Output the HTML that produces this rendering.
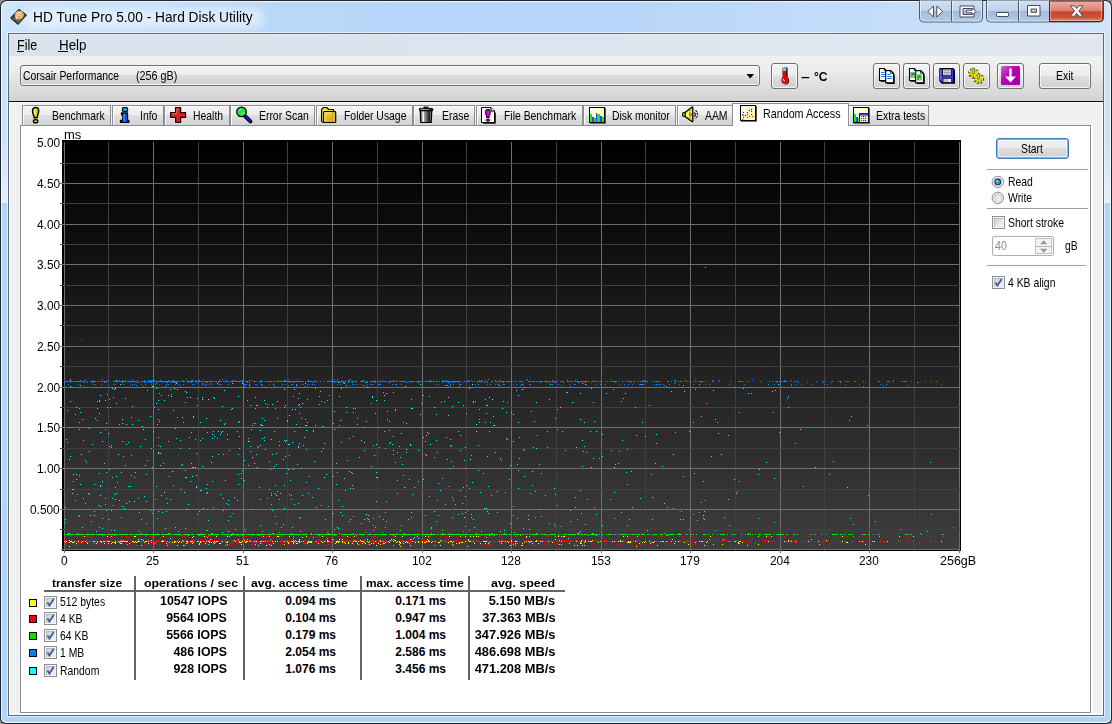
<!DOCTYPE html>
<html lang="en"><head><meta charset="utf-8"><title>HD Tune Pro 5.00 - Hard Disk Utility</title>
<style>
*{box-sizing:border-box}
html,body{margin:0;padding:0}
body{width:1112px;height:724px;overflow:hidden;background:#8a8a8a;position:relative;font-family:"Liberation Sans",sans-serif;color:#000}
.a{position:absolute}
.t{position:absolute;white-space:pre;line-height:1;transform-origin:0 0;font-size:13px}
.b{font-weight:bold}
#win{left:0;top:0;width:1112px;height:724px;border-radius:7px 7px 6px 6px;background:#1b2633;overflow:hidden}
#glass{left:1px;top:1px;width:1110px;height:722px;border-radius:6px 6px 5px 5px;background:#f4f9ff;overflow:hidden}
#gl2{left:1px;top:1px;width:1108px;height:720px;border-radius:5px;overflow:hidden;
 background:linear-gradient(90deg,#d0e5fb 0,#c7dffa 50px,#b9d7f9 275px,#b8d6f9 620px,#c8dffa 950px,#d2e6fb 100%) 0 0/100% 31px no-repeat,
 linear-gradient(180deg,#cee3f9 0,#cde2f9 140px,#e6f0fb 201px,#b3d4f7 201px,#b2d4f8 100%)}
#tglow{left:22px;top:6px;width:240px;height:21px;border-radius:10px;background:rgba(255,255,255,.5);filter:blur(5px)}
#tglowr{display:none}
#frin{left:6px;top:31px;width:1098px;height:685px;border:1px solid rgba(240,248,255,.75)}
#client{left:8px;top:33px;width:1096px;height:683px;background:#f0f0f0;border:1px solid #5b6a7b;box-shadow:inset 1px 0 0 #fff,inset -1px 0 0 #fff}
#menubar{left:9px;top:34px;width:1094px;height:22px;background:linear-gradient(90deg,#dbe2ed 0,#dde4ed 50%,#e3e8f0 100%);border-top:1px solid #e8edf5}
#tool{left:9px;top:56px;width:1094px;height:45px;background:linear-gradient(180deg,#f1f1f1 0,#ececec 30%,#d2d2d2 100%)}
#tline{left:9px;top:101px;width:1094px;height:1px;background:#0c0c0c}
#tline2{left:9px;top:102px;width:1094px;height:1px;background:#fafafa}
.btn{position:absolute;border:1px solid #707070;border-radius:3px;background:linear-gradient(180deg,#f3f3f3 0,#ececec 48%,#dedede 50%,#d0d0d0 100%);box-shadow:inset 0 0 0 1px rgba(255,255,255,.75)}
.tab{position:absolute;top:105px;height:20px;border:1px solid #8c8e94;border-bottom:none;background:linear-gradient(180deg,#f3f3f3 0,#ededed 48%,#dfdfdf 50%,#d3d3d3 100%);box-shadow:inset 1px 1px 0 rgba(255,255,255,.9)}
#pane{left:20px;top:125px;width:1071px;height:588px;background:#fff;border:1px solid #8a8d97;box-shadow:2px 0 0 #fff}
#bot{left:9px;top:713px;width:1094px;height:2px;background:#fff}
#seltab{left:732px;top:103px;width:117px;height:23px;background:#fff;border:1px solid #8c8e94;border-bottom:none}
.sep{position:absolute;height:1px;background:#a0a0a0}
.vs{position:absolute;width:2px;top:576px;height:104px;background:#646464}
.cb{position:absolute;width:13px;height:13px;border:1px solid #8e8f8f;background:#f4f4f4}
.cbi{position:absolute;left:1px;top:1px;width:9px;height:9px;background:linear-gradient(135deg,#c3c7cf 0,#e4e6e9 55%,#f8f8f8 100%);box-shadow:inset 1px 1px 0 #b4b9c2,inset -1px -1px 0 #e6e8ea}
.sw{position:absolute;left:29px;width:8px;height:8px;border:1px solid #000}
</style></head>
<body>
<div id="win" class="a"><div id="glass" class="a"><div id="gl2" class="a"><div id="tglow" class="a"></div><div id="tglowr" class="a"></div></div><div id="frin" class="a"></div></div></div>
<div id="client" class="a"></div><div id="menubar" class="a"></div><div id="tool" class="a"></div><div id="tline" class="a"></div><div id="tline2" class="a"></div><div id="bot" class="a"></div>
<svg class="a" style="left:9px;top:8px" width="19" height="18" viewBox="0 0 19 18">
<polygon points="1.5,10 10,1.2 17.5,7 9,16.5" fill="#3a3a3e" stroke="#26262a" stroke-width="1" stroke-linejoin="round"/>
<polygon points="3.5,10.5 9.5,14.8 13.5,10.6 8,7.5" fill="#6a6668"/>
<ellipse cx="10.3" cy="7" rx="4.6" ry="4.2" fill="#f0b24e" transform="rotate(-20 10.3 7)"/>
<ellipse cx="9.6" cy="6" rx="2.6" ry="2.2" fill="#f8cc7e" transform="rotate(-20 9.6 6)"/>
<circle cx="10.4" cy="6.9" r="1.3" fill="#c9c4c8"/>
<path d="M7 8.2 L7.6 11.2" stroke="#f4f0e8" stroke-width="1.1"/>
</svg>
<span class="t" style="left:32.5px;top:9px;font-size:15px;transform:scaleX(0.915);">HD Tune Pro 5.00 - Hard Disk Utility</span>
<svg class="a" style="left:917px;top:0" width="190" height="25" viewBox="0 0 190 25">
<defs>
<linearGradient id="cg" x1="0" y1="0" x2="0" y2="1"><stop offset="0" stop-color="#d3e2f3"/><stop offset=".5" stop-color="#bfd2ea"/><stop offset=".52" stop-color="#a3bad7"/><stop offset="1" stop-color="#b4cdea"/></linearGradient>
<linearGradient id="cr" x1="0" y1="0" x2="0" y2="1"><stop offset="0" stop-color="#efb0a4"/><stop offset=".5" stop-color="#dc7a6a"/><stop offset=".52" stop-color="#c9432f"/><stop offset=".8" stop-color="#cf5238"/><stop offset="1" stop-color="#e39a80"/></linearGradient>
</defs>
<path d="M2.5 0 V18 a4 4 0 0 0 4 4 H61.5 a4 4 0 0 0 4 -4 V0 Z" fill="url(#cg)" stroke="#4c5b6c"/>
<path d="M3.5 1 V18 a3 3 0 0 0 3 3 H61.5 a3 3 0 0 0 3 -3 V1" fill="none" stroke="rgba(255,255,255,.55)"/>
<path d="M34.5 1 V21.5" stroke="#4c5b6c"/><path d="M35.5 1 V20.5" stroke="rgba(255,255,255,.5)"/>
<path d="M69.500 0 V18 a4 4 0 0 0 4 4 H182.500 a4 4 0 0 0 4 -4 V0 Z" fill="url(#cg)" stroke="#4c5b6c"/>
<path d="M132.500 1 V21.500 H182.500 a3.500 3.500 0 0 0 3.500 -3.500 V1 Z" fill="url(#cr)" stroke="#5c1a14"/>
<path d="M70.500 1 V18 a3 3 0 0 0 3 3 H131.500" fill="none" stroke="rgba(255,255,255,.55)"/>
<path d="M133.500 1.500 V20.500 H182 a2.500 2.500 0 0 0 2.500 -2.500 V1.500" fill="none" stroke="rgba(255,255,255,.35)"/>
<path d="M101.500 1 V21.500" stroke="#4c5b6c"/><path d="M102.500 1 V20.500" stroke="rgba(255,255,255,.5)"/>
<!-- icons -->
<path d="M16.500 6 V17 L10.800 11.500 Z" fill="#fff" stroke="#454a5a" stroke-width="1" stroke-linejoin="round"/>
<path d="M19.800 6 V17 L25.500 11.500 Z" fill="#fff" stroke="#454a5a" stroke-width="1" stroke-linejoin="round"/>
<path d="M43 6 H57 V9.500 H54.500 V8.500 H46 V14.500 H54.500 V13.500 H57 V17 H43 Z" fill="#fff" stroke="#454a5a" stroke-width="1" stroke-linejoin="round"/>
<path d="M49.500 10.300 H55 V8.200 L59.300 11.500 L55 14.800 V12.700 H49.500 Z" fill="#fff" stroke="#454a5a" stroke-width=".9" stroke-linejoin="round"/>
<rect x="79.500" y="12.500" width="12" height="4" rx=".8" fill="#fff" stroke="#454a5a"/>
<path d="M110.500 5.500 H123 V16 H110.500 Z M114 9 V12.300 H119.500 V9 Z" fill="#fff" fill-rule="evenodd" stroke="#454a5a" stroke-linejoin="round"/>
<path d="M153.500 5.800 H157.600 L159.700 8.700 L161.800 5.800 H165.900 L161.800 11 L165.900 16.200 H161.800 L159.700 13.300 L157.600 16.200 H153.500 L157.600 11 Z" fill="#fff" stroke="#4a4f63" stroke-width="1" stroke-linejoin="round"/>
</svg>
<span class="t" style="left:17px;top:37px;font-size:15px;transform:scaleX(0.84);">File</span>
<span class="t" style="left:58.5px;top:37px;font-size:15px;transform:scaleX(0.89);">Help</span>
<div class="a" style="left:17px;top:51px;width:7px;height:1px;background:#000"></div><div class="a" style="left:58px;top:51px;width:10px;height:1px;background:#000"></div>
<div class="btn" style="left:20px;top:65px;width:740px;height:21px"></div>
<span class="t" style="left:23px;top:69px;transform:scaleX(0.8);">Corsair Performance</span>
<span class="t" style="left:136.3px;top:69px;transform:scaleX(0.83);">(256 gB)</span>
<svg class="a" style="left:746px;top:74px" width="9" height="5" viewBox="0 0 9 5"><path d="M0.500 0 H8 L4.250 4.500 Z" fill="#000"/></svg>
<div class="btn" style="left:771px;top:63px;width:27px;height:26px"></div>
<svg class="a" style="left:777px;top:66px" width="16" height="20" viewBox="0 0 16 20">
<rect x="6.500" y="1.600" width="4.100" height="12" fill="#0a0a0a"/><circle cx="8.500" cy="14.700" r="3.700" fill="#0a0a0a"/>
<circle cx="7.300" cy="14.200" r="3.700" fill="#5fe6ea"/>
<circle cx="7.900" cy="14.200" r="3.500" fill="#f00000"/>
<rect x="5.700" y="1.800" width="3.600" height="11" fill="#f00000"/>
<rect x="5.700" y="1.800" width="3.600" height="3.200" fill="#3fe2e8"/>
<rect x="5.300" y="2" width=".8" height="10" fill="#7a2020" opacity=".5"/>
<path d="M6.200 12.800 Q6.300 14.600 7.800 15" stroke="#fff" stroke-width="1.100" fill="none"/>
</svg>
<span class="t b" style="left:801px;top:70px;transform:scaleX(1.2);">–</span>
<span class="t b" style="left:813.5px;top:70px;transform:scaleX(0.93);">°C</span>
<div class="btn" style="left:873px;top:63px;width:27px;height:26px"></div>
<div class="btn" style="left:903px;top:63px;width:27px;height:26px"></div>
<div class="btn" style="left:933px;top:63px;width:27px;height:26px"></div>
<div class="btn" style="left:963px;top:63px;width:27px;height:26px"></div>
<div class="btn" style="left:997px;top:63px;width:27px;height:26px"></div>
<div class="btn" style="left:1039px;top:63px;width:52px;height:26px"></div>
<span class="t" style="left:1056px;top:69px;transform:scaleX(0.8);">Exit</span>
<svg class="a" style="left:878px;top:67px" width="18" height="18" viewBox="0 0 18 18">
<path d="M2.500 2.500 H7 L9 4.500 V14.800 H2.500 Z" fill="#000"/>
<path d="M1.500 1.500 H6.300 L8.300 3.500 V13.500 H1.500 Z" fill="#fff" stroke="#000" stroke-width="1.100"/>
<path d="M6.300 1.500 V3.500 H8.300" fill="none" stroke="#000" stroke-width=".8"/>
<path d="M3 5.500 H6.500 M3 7.500 H7 M3 9.500 H7" stroke="#0a84ff" stroke-width="1.100"/>
<path d="M8.700 4.700 H13.700 L16.700 7.500 V17 H8.700 Z" fill="#000"/>
<path d="M7.700 3.600 H12.700 L15.500 6.300 V15.800 H7.700 Z" fill="#fff" stroke="#000" stroke-width="1.100"/>
<path d="M12.700 3.600 V6.300 H15.500" fill="none" stroke="#000" stroke-width=".8"/>
<path d="M9.300 7.500 H12.500 M9.300 9.500 H14 M9.300 11.500 H14" stroke="#0a84ff" stroke-width="1.100"/>
</svg>
<svg class="a" style="left:908px;top:67px" width="18" height="18" viewBox="0 0 18 18">
<path d="M2.500 2.500 H7 L9 4.500 V14.800 H2.500 Z" fill="#000"/>
<path d="M1.500 1.500 H6.300 L8.300 3.500 V13.500 H1.500 Z" fill="#fff" stroke="#000" stroke-width="1.100"/>
<path d="M6.300 1.500 V3.500 H8.300" fill="none" stroke="#000" stroke-width=".8"/>
<rect x="2.600" y="5" width="4.600" height="5.800" fill="#18c828"/><rect x="2.600" y="5" width="4.600" height="1" fill="#30c8ff"/><rect x="4.200" y="6.500" width="1.600" height="1.600" fill="#f01010"/><rect x="4.600" y="8" width="1.300" height="2.200" fill="#e8e020"/>
<path d="M8.700 4.700 H13.700 L16.700 7.500 V17 H8.700 Z" fill="#000"/>
<path d="M7.700 3.600 H12.700 L15.500 6.300 V15.800 H7.700 Z" fill="#fff" stroke="#000" stroke-width="1.100"/>
<path d="M12.700 3.600 V6.300 H15.500" fill="none" stroke="#000" stroke-width=".8"/>
<rect x="9" y="7.600" width="4.600" height="5.800" fill="#18c828"/><rect x="9" y="7.600" width="4.600" height="1" fill="#30c8ff"/><rect x="10.600" y="9.200" width="1.600" height="1.600" fill="#f01010"/><rect x="11" y="10.800" width="1.300" height="2.200" fill="#e8e020"/>
</svg>
<svg class="a" style="left:938px;top:67px" width="18" height="18" viewBox="0 0 18 18">
<path d="M2.500 2.500 H17 V16.800 H4 L2.500 15.500 Z" fill="#000"/>
<path d="M1.800 1.500 H15.500 V15.500 H3.200 L1.800 14.200 Z" fill="#3434ff" stroke="#000" stroke-width="1"/>
<path d="M2.800 2.500 V13.500" stroke="#8a8aff" stroke-width=".9"/>
<rect x="4.500" y="2" width="9" height="6.800" fill="#dcdcdc" stroke="#000" stroke-width=".8"/>
<path d="M5.500 3.800 H12.500 M5.500 5.500 H12.500 M5.500 7.200 H12.500" stroke="#8a8a8a" stroke-width=".8"/>
<rect x="5" y="11.300" width="8.500" height="4" fill="#c4c4c4" stroke="#000" stroke-width=".6"/>
<rect x="10.600" y="12" width="2" height="2.800" fill="#fff"/>
</svg>
<svg class="a" style="left:968px;top:66px" width="20" height="20" viewBox="0 0 20 20">
<g fill="none" stroke="#3c3600" stroke-dasharray="1.700 1.250">
<circle cx="5.600" cy="7.200" r="3.900" stroke-width="3"/><circle cx="10.700" cy="12.600" r="3.900" stroke-width="3"/></g>
<circle cx="5.600" cy="7.200" r="3.300" fill="#3c3600"/><circle cx="10.700" cy="12.600" r="3.300" fill="#3c3600"/>
<g fill="none" stroke="#ecec00" stroke-dasharray="1.700 1.250">
<circle cx="5.300" cy="6.800" r="3.700" stroke-width="2.200"/><circle cx="10.400" cy="12.200" r="3.700" stroke-width="2.200"/></g>
<circle cx="5.300" cy="6.800" r="3" fill="#e6e600"/><circle cx="10.400" cy="12.200" r="3" fill="#e6e600"/>
<path d="M4.300 7.500 V3.200 L5.300 1.800 L6.300 3.200 V7.500 Z" fill="#b8b8b8" stroke="#444" stroke-width=".7"/>
<path d="M9.400 13 V8.700 L10.400 7.300 L11.400 8.700 V13 Z" fill="#b8b8b8" stroke="#444" stroke-width=".7"/>
<path d="M5 3.200 V7 M10.100 8.700 V12.500" stroke="#fff" stroke-width=".6"/>
</svg>
<svg class="a" style="left:1001px;top:66px" width="20" height="20" viewBox="0 0 20 20">
<defs><linearGradient id="mg" x1="0" y1="0" x2="1" y2="1"><stop offset="0" stop-color="#d860d8"/><stop offset=".45" stop-color="#b400b4"/><stop offset="1" stop-color="#a000a0"/></linearGradient></defs>
<rect x="0" y="0" width="19" height="19" rx="1.500" fill="url(#mg)"/>
<path d="M8.300 2.500 H10.700 V10.500 H15 L9.500 16.500 L4 10.500 H8.300 Z" fill="#fff"/>
</svg>
<div id="pane" class="a"></div>
<div class="tab" style="left:22px;width:89px"></div>
<span class="t" style="left:51.5px;top:109px;transform:scaleX(0.8);">Benchmark</span>
<div class="tab" style="left:112px;width:52px"></div>
<span class="t" style="left:140.3px;top:109px;transform:scaleX(0.8);">Info</span>
<div class="tab" style="left:164px;width:66px"></div>
<span class="t" style="left:193.2px;top:109px;transform:scaleX(0.8);">Health</span>
<div class="tab" style="left:230px;width:85px"></div>
<span class="t" style="left:258.7px;top:109px;transform:scaleX(0.8);">Error Scan</span>
<div class="tab" style="left:316px;width:97px"></div>
<span class="t" style="left:344.2px;top:109px;transform:scaleX(0.8);">Folder Usage</span>
<div class="tab" style="left:413px;width:62px"></div>
<span class="t" style="left:442px;top:109px;transform:scaleX(0.8);">Erase</span>
<div class="tab" style="left:476px;width:107px"></div>
<span class="t" style="left:504px;top:109px;transform:scaleX(0.8);">File Benchmark</span>
<div class="tab" style="left:583px;width:93px"></div>
<span class="t" style="left:612px;top:109px;transform:scaleX(0.8);">Disk monitor</span>
<div class="tab" style="left:677px;width:56px"></div>
<span class="t" style="left:705px;top:109px;transform:scaleX(0.8);">AAM</span>
<div class="tab" style="left:848px;width:81px"></div>
<span class="t" style="left:876.3px;top:109px;transform:scaleX(0.8);">Extra tests</span>
<div id="seltab" class="a"></div>
<span class="t" style="left:762.8px;top:107px;transform:scaleX(0.825);">Random Access</span>
<svg class="a" style="left:30px;top:106px" width="12" height="18" viewBox="0 0 12 18"><path d="M5.600 1.600 C8.200 1.600 8.900 3.200 8.600 5.600 C8.300 8 7.300 9.600 7 11.800 H4.300 C4 9.600 2.800 8 2.600 5.600 C2.400 3.200 3.200 1.600 5.600 1.600 Z" fill="#dede00" stroke="#000" stroke-width="1.500"/>
<path d="M4.500 3.500 C4.200 5 4.500 7 5.100 9" stroke="#ffff8a" stroke-width="1.100" fill="none"/>
<ellipse cx="5.600" cy="15.200" rx="2.200" ry="1.600" fill="#d4d400" stroke="#000" stroke-width="1.400"/></svg>
<svg class="a" style="left:119px;top:106px" width="12" height="18" viewBox="0 0 12 18"><rect x="3.500" y="1.600" width="5" height="3.800" rx="1" fill="#00c4ff" stroke="#000" stroke-width="1.300"/>
<path d="M2.500 7 H8.500 V14.500 H9.800 V16.300 H1.500 V14.500 H3.800 V8.800 H2.500 Z" fill="#0058ff" stroke="#000" stroke-width="1.300" stroke-linejoin="round"/>
<path d="M5 8 V15.500" stroke="#3aa0ff" stroke-width="1.400"/></svg>
<svg class="a" style="left:169px;top:106px" width="19" height="18" viewBox="0 0 19 18"><path d="M7.300 2.300 H12.300 V7.300 H17.300 V12 H12.300 V17 H7.300 V12 H2.300 V7.300 H7.300 Z" fill="#444" opacity=".55"/>
<path d="M6.600 1.600 H11.500 V6.600 H16.500 V11.300 H11.500 V16.300 H6.600 V11.300 H1.600 V6.600 H6.600 Z" fill="#e22020" stroke="#140000" stroke-width="1.200" stroke-linejoin="round"/>
<path d="M7.700 2.800 H10 M2.800 7.800 H7.700 V3" stroke="#f86060" stroke-width="1" fill="none"/></svg>
<svg class="a" style="left:235px;top:105px" width="19" height="19" viewBox="0 0 19 19"><path d="M10 11 L15.400 16.400" stroke="#000" stroke-width="3.900" stroke-linecap="round"/>
<path d="M9.800 10.600 L15 15.800" stroke="#1212e0" stroke-width="2.300" stroke-linecap="round"/>
<circle cx="6.500" cy="6.900" r="4.800" fill="#28e040" stroke="#000" stroke-width="1.200"/>
<path d="M3.800 6.300 L5.800 4.300 M6.800 9.600 L9.200 7.200" stroke="#c8ffd0" stroke-width="1"/></svg>
<svg class="a" style="left:320px;top:106px" width="18" height="18" viewBox="0 0 18 18"><defs><linearGradient id="fg" x1="0" y1="0" x2="1" y2="1"><stop offset="0" stop-color="#f4d838"/><stop offset=".6" stop-color="#e0b41a"/><stop offset="1" stop-color="#c89808"/></linearGradient></defs>
<path d="M1.600 15.500 V3.300 L3.300 1.600 H7 L8.600 3.500 H13.500 V6" fill="#f8e650" stroke="#000" stroke-width="1.200" stroke-linejoin="round"/>
<path d="M1.600 15.500 L3.600 16.500" stroke="#000" stroke-width="1.200"/>
<rect x="3.700" y="5.600" width="12" height="10.900" rx=".8" fill="url(#fg)" stroke="#000" stroke-width="1.200"/>
<path d="M4.800 15.500 V6.700 H12.500" stroke="#fff6a0" stroke-width=".9" fill="none"/>
<path d="M13 6.300 V15.800" stroke="#8c8c8c" stroke-width=".8"/>
<path d="M14 6.300 V15.800" stroke="#f4d848" stroke-width="1"/></svg>
<svg class="a" style="left:418px;top:106px" width="16" height="18" viewBox="0 0 16 18"><defs><linearGradient id="tg" x1="0" y1="0" x2="1" y2="0"><stop offset="0" stop-color="#000"/><stop offset=".14" stop-color="#a8a8a8"/><stop offset=".27" stop-color="#fff"/><stop offset=".36" stop-color="#a0a0a0"/><stop offset=".58" stop-color="#5c5c5c"/><stop offset=".8" stop-color="#222"/><stop offset=".92" stop-color="#8a8a8a"/><stop offset="1" stop-color="#000"/></linearGradient></defs>
<path d="M2.200 4.500 H13.800 L13.200 16.500 H2.800 Z" fill="url(#tg)" stroke="#000" stroke-width="1.200" stroke-linejoin="round"/>
<rect x="1.400" y="2.400" width="13.400" height="2.400" rx=".6" fill="#2a2a2a" stroke="#000" stroke-width="1"/>
<path d="M2.500 3.300 H11" stroke="#c8c8c8" stroke-width=".9"/>
<rect x="6" y="1" width="4" height="1.600" fill="#555" stroke="#000" stroke-width=".9"/></svg>
<svg class="a" style="left:480px;top:106px" width="17" height="18" viewBox="0 0 17 18"><path d="M15.500 6.500 V17.500 H3" fill="none" stroke="#3a3a3a"/>
<path d="M1.500 1.500 H11 L14.500 5 V16.500 H1.500 Z" fill="#efefef" stroke="#000"/>
<path d="M3 2 V16 M13 6 V16" stroke="#fff" stroke-width="1.600"/>
<path d="M11 1.500 V5 H14.500" fill="#fff" stroke="#000" stroke-width="1"/>
<path d="M7.900 3.600 C9.900 3.600 10.400 5 10.100 7 C9.800 8.800 9.100 10 8.900 11.400 H6.900 C6.700 10 5.900 8.800 5.700 7 C5.400 5 6.100 3.600 7.900 3.600 Z" fill="#f000f0" stroke="#000" stroke-width="1.100"/>
<ellipse cx="7.900" cy="14.200" rx="1.700" ry="1.100" fill="#f000f0" stroke="#000" stroke-width="1"/></svg>
<svg class="a" style="left:588px;top:106px" width="19" height="18" viewBox="0 0 19 18"><defs><linearGradient id="yg" x1="0" y1="0" x2="1" y2="0"><stop offset="0" stop-color="#fffff4"/><stop offset="1" stop-color="#ffffa8"/></linearGradient></defs>
<rect x="2" y="2" width="16" height="15.800" fill="#555"/>
<rect x="1.500" y="1.500" width="15" height="15" fill="url(#yg)" stroke="#000"/>
<g fill="#0cf00c"><rect x="2" y="8" width="2" height="8"/><rect x="6" y="12" width="2" height="4"/><rect x="9" y="8" width="3" height="8"/><rect x="14" y="11" width="2" height="5"/></g>
<g fill="#3c3cff"><rect x="4" y="11" width="2" height="5"/><rect x="8" y="7" width="1" height="9"/><rect x="12" y="10" width="2" height="6"/></g></svg>
<svg class="a" style="left:681px;top:105px" width="19" height="19" viewBox="0 0 19 19"><path d="M4 7.500 L10.800 2.200 H11.800 V16.600 H10.800 L4 11.500 Z" fill="#ecec00" stroke="#000" stroke-width="1.300" stroke-linejoin="round"/>
<rect x="1.600" y="7.600" width="2.600" height="3.800" rx="1.200" fill="#f4f46a" stroke="#000" stroke-width="1.200"/>
<path d="M5 9 L8 6.500 V12.500 L5 10.500 Z" fill="#ffff7a"/>
<path d="M8.700 4.500 V15" stroke="#6a6a3a" stroke-width=".8" stroke-dasharray="1.500 1"/>
<circle cx="9.600" cy="9.500" r="1" fill="#e8e8e8" stroke="#222" stroke-width=".6"/>
<path d="M13.400 7.300 Q15.300 9.500 13.400 11.900" fill="none" stroke="#111" stroke-width="1.100"/>
<path d="M14.600 5.300 Q18.400 9.500 14.600 14" fill="none" stroke="#111" stroke-width="1.100" stroke-dasharray="2.200 .8"/></svg>
<svg class="a" style="left:739px;top:104px" width="19" height="19" viewBox="0 0 19 19"><defs><linearGradient id="yr" x1="0" y1="0" x2="1" y2="1"><stop offset="0" stop-color="#fffff6"/><stop offset="1" stop-color="#ffffa0"/></linearGradient></defs>
<rect x="2" y="2" width="16" height="15.800" fill="#555"/>
<rect x="1.500" y="1.500" width="15" height="15" fill="url(#yr)" stroke="#000"/>
<g fill="#1a1aff"><rect x="11.9" y="4.9" width="1.200" height="1.200"/><rect x="9.9" y="5.9" width="1.200" height="1.200"/><rect x="11.9" y="6.9" width="1.200" height="1.200"/><rect x="3.9" y="7.9" width="1.200" height="1.200"/><rect x="7.9" y="7.9" width="1.200" height="1.200"/><rect x="2.9" y="9.9" width="1.200" height="1.200"/><rect x="5.9" y="10.9" width="1.200" height="1.200"/></g>
<g fill="#ff1010"><rect x="7.9" y="9.9" width="1.200" height="1.200"/><rect x="11.9" y="9.9" width="1.200" height="1.200"/><rect x="3.9" y="10.9" width="1.200" height="1.200"/><rect x="9.9" y="11.9" width="1.200" height="1.200"/><rect x="12.9" y="11.9" width="1.200" height="1.200"/><rect x="3.9" y="12.9" width="1.200" height="1.200"/><rect x="7.9" y="12.9" width="1.200" height="1.200"/><rect x="2.9" y="14.9" width="1.200" height="1.200"/></g></svg>
<svg class="a" style="left:852px;top:106px" width="19" height="18" viewBox="0 0 19 18"><defs><linearGradient id="yh" x1="0" y1="0" x2="1" y2="0"><stop offset="0" stop-color="#fffff4"/><stop offset="1" stop-color="#ffffb0"/></linearGradient></defs>
<rect x="2" y="2" width="16" height="15.800" fill="#555"/>
<rect x="1.500" y="1.500" width="15" height="15" fill="url(#yh)" stroke="#000"/>
<rect x="2" y="8" width="2" height="8" fill="#0cf00c"/><rect x="4" y="11" width="2" height="5" fill="#3c3cff"/><rect x="6" y="12" width="1" height="4" fill="#0cf00c"/>
<rect x="7.500" y="7.700" width="9" height="8.800" fill="#f4f4f4" stroke="#000"/>
<rect x="8" y="8.200" width="8" height="1.300" fill="#1414ff"/>
<g fill="#ff1010"><rect x="9" y="10" width="1.200" height="1.200"/><rect x="13" y="10" width="1.200" height="1.200"/><rect x="11" y="12" width="1.200" height="1.200"/><rect x="13" y="12" width="1.200" height="1.200"/><rect x="9" y="14" width="1.200" height="1.200"/><rect x="11" y="14" width="1.200" height="1.200"/></g>
<rect x="11" y="10" width="1.200" height="1.200" fill="#1414ff"/><rect x="13" y="14" width="1.200" height="1.200" fill="#1414ff"/><rect x="9" y="12" width="1.200" height="1.200" fill="#10c010"/></svg>
<div class="a" style="left:62px;top:140px;width:899px;height:411px;background:#000"></div>
<div class="a" style="left:64px;top:142px;width:896px;height:407px;background:linear-gradient(180deg,#000 0,#3d3d3d 100%)"></div>
<svg class="a" style="left:62px;top:140px" width="899" height="413" viewBox="0 0 899 413"><rect x="2" y="2" width="1" height="411" fill="#6e6e6e"/><rect x="46" y="2" width="1" height="409" fill="#404040"/><rect x="91" y="2" width="1" height="411" fill="#6e6e6e"/><rect x="136" y="2" width="1" height="409" fill="#404040"/><rect x="181" y="2" width="1" height="411" fill="#6e6e6e"/><rect x="225" y="2" width="1" height="409" fill="#404040"/><rect x="270" y="2" width="1" height="411" fill="#6e6e6e"/><rect x="315" y="2" width="1" height="409" fill="#404040"/><rect x="360" y="2" width="1" height="411" fill="#6e6e6e"/><rect x="404" y="2" width="1" height="409" fill="#404040"/><rect x="449" y="2" width="1" height="411" fill="#6e6e6e"/><rect x="494" y="2" width="1" height="409" fill="#404040"/><rect x="539" y="2" width="1" height="411" fill="#6e6e6e"/><rect x="583" y="2" width="1" height="409" fill="#404040"/><rect x="628" y="2" width="1" height="411" fill="#6e6e6e"/><rect x="673" y="2" width="1" height="409" fill="#404040"/><rect x="718" y="2" width="1" height="411" fill="#6e6e6e"/><rect x="762" y="2" width="1" height="409" fill="#404040"/><rect x="807" y="2" width="1" height="411" fill="#6e6e6e"/><rect x="852" y="2" width="1" height="409" fill="#404040"/><rect x="897" y="2" width="1" height="411" fill="#6e6e6e"/><rect x="2" y="23" width="896" height="1" fill="#404040"/><rect x="2" y="43" width="896" height="1" fill="#6e6e6e"/><rect x="2" y="63" width="896" height="1" fill="#404040"/><rect x="2" y="84" width="896" height="1" fill="#6e6e6e"/><rect x="2" y="104" width="896" height="1" fill="#404040"/><rect x="2" y="124" width="896" height="1" fill="#6e6e6e"/><rect x="2" y="145" width="896" height="1" fill="#404040"/><rect x="2" y="165" width="896" height="1" fill="#6e6e6e"/><rect x="2" y="185" width="896" height="1" fill="#404040"/><rect x="2" y="206" width="896" height="1" fill="#6e6e6e"/><rect x="2" y="226" width="896" height="1" fill="#404040"/><rect x="2" y="247" width="896" height="1" fill="#6e6e6e"/><rect x="2" y="267" width="896" height="1" fill="#404040"/><rect x="2" y="287" width="896" height="1" fill="#6e6e6e"/><rect x="2" y="308" width="896" height="1" fill="#404040"/><rect x="2" y="328" width="896" height="1" fill="#6e6e6e"/><rect x="2" y="349" width="896" height="1" fill="#404040"/><rect x="2" y="369" width="896" height="1" fill="#6e6e6e"/><rect x="2" y="389" width="896" height="1" fill="#404040"/><rect x="2" y="409" width="896" height="1" fill="#6e6e6e"/><path d="M643 127h1M145 242h1M276 242h1M304 242h1M114 243h1M155 243h1M170 243h1M180 243h1M243 243h1M282 243h1M520 243h1M53 244h1M58 244h1M194 244h1M199 244h1M211 244h1M358 244h1M410 244h1M428 244h1M488 244h1M523 244h1M562 244h1M579 244h1M596 244h1M637 244h1M716 244h1M18 245h1M187 245h1M234 245h1M284 245h1M383 245h1M385 245h1M621 245h1M8 246h1M90 246h2M343 246h1M397 246h1M203 247h1M305 247h1M307 247h1M462 247h1M672 247h1M50 248h1M53 248h1M94 248h1M112 248h1M253 248h1M279 248h1M407 248h1M529 248h1M681 248h1M52 249h1M108 249h1M115 249h1M222 249h1M232 249h1M460 249h1M551 249h1M633 249h1M85 250h1M162 250h1M454 250h1M651 250h1M713 250h1M123 251h1M258 251h1M609 251h1M622 251h1M710 251h1M124 252h1M321 252h1M331 252h1M504 252h2M97 253h1M237 253h1M324 253h1M518 253h1M544 253h1M563 253h1M686 253h1M689 253h1M45 254h1M109 254h1M38 255h1M99 255h1M106 255h1M267 255h1M322 255h1M361 255h1M456 255h1M109 256h1M176 256h1M231 256h1M257 256h1M277 256h1M310 256h1M367 256h1M726 256h1M51 257h1M125 257h1M128 257h1M140 257h1M151 257h1M193 257h1M310 257h1M386 257h1M427 257h1M63 258h1M135 258h1M152 258h1M236 258h1M561 258h1M725 258h1M47 259h1M140 259h1M146 259h1M245 259h1M349 259h1M423 259h1M430 259h1M487 259h1M37 260h1M43 260h1M96 260h1M102 260h1M185 260h1M202 260h1M265 260h1M314 260h1M322 260h1M8 261h1M35 261h1M37 261h1M215 261h1M259 261h1M382 261h1M411 261h1M413 261h1M441 261h1M559 261h1M123 262h1M262 262h1M379 262h1M396 262h1M411 262h1M445 262h1M474 262h1M510 262h1M531 262h1M54 263h1M94 263h1M203 263h1M240 263h1M309 263h1M359 263h1M644 263h1M205 264h1M210 264h1M237 264h1M257 264h1M135 265h1M188 265h1M194 265h2M223 265h1M236 265h1M401 265h1M424 265h2M587 265h1M70 266h1M160 266h1M390 266h1M14 267h1M45 267h1M48 267h1M92 267h1M205 267h1M222 267h1M238 267h1M284 267h1M372 267h1M498 267h1M573 267h1M726 267h1M17 268h1M35 268h1M170 268h1M193 268h1M213 268h1M291 268h1M293 268h1M349 268h2M440 268h1M96 269h1M169 269h1M230 269h1M233 269h1M333 269h1M417 269h1M495 269h1M5 270h1M111 270h1M333 270h1M272 271h1M325 271h1M469 271h1M18 272h1M284 272h1M291 272h1M444 272h1M449 272h1M677 272h1M711 272h1M37 273h1M237 273h1M313 273h1M404 273h1M424 273h1M13 274h1M358 274h1M374 274h1M451 274h1M227 275h1M386 275h1M88 276h1M131 276h1M431 276h1M639 276h1M789 276h1M69 277h1M115 277h1M120 277h1M131 277h1M33 278h1M144 278h1M200 278h1M215 278h1M239 278h1M295 278h1M493 278h1M20 279h1M60 279h1M96 279h1M243 279h1M325 279h1M417 279h1M518 279h1M653 279h1M35 280h1M76 280h1M158 280h1M202 280h1M225 280h1M278 280h1M787 280h1M97 281h1M177 281h1M225 281h1M304 281h1M327 281h1M472 281h1M532 281h1M17 282h1M121 282h1M138 282h1M176 282h1M245 282h1M341 282h1M417 282h1M423 282h1M428 282h1M456 282h1M522 282h1M580 282h1M631 282h1M655 282h1M44 283h1M60 283h1M163 283h1M191 283h1M193 283h1M271 283h1M344 283h1M57 284h1M64 284h1M70 284h1M95 284h1M162 284h1M198 284h1M234 284h1M295 284h1M414 284h1M190 285h1M199 285h2M243 285h2M253 285h1M277 285h1M431 285h2M805 285h1M80 286h1M260 286h1M7 287h1M131 287h1M142 287h1M237 287h1M301 287h1M316 287h1M359 287h1M27 288h1M113 288h1M17 289h1M43 289h1M81 289h1M189 289h1M272 289h1M495 289h1M738 289h1M198 290h1M244 290h1M251 290h1M327 290h1M91 291h1M151 291h1M156 291h1M160 291h1M175 291h1M212 291h1M232 291h1M251 291h1M322 291h1M396 291h1M414 291h1M427 291h1M485 291h1M500 291h1M528 291h1M534 291h1M627 291h1M38 292h1M129 292h1M145 292h1M159 292h1M365 292h1M613 292h1M717 292h1M46 293h1M339 293h1M366 293h1M656 293h1M150 294h1M158 294h1M165 294h1M540 294h1M594 294h1M364 295h1M398 295h1M475 295h1M574 295h1M666 295h1M152 296h1M177 296h1M291 296h1M331 296h1M583 296h1M96 297h1M127 297h1M202 297h1M242 297h1M361 297h1M384 297h1M457 297h1M114 298h1M140 298h1M150 298h1M155 298h1M186 298h1M200 298h1M287 298h1M444 298h1M4 299h1M83 299h1M133 299h1M165 299h1M209 299h1M388 299h1M445 299h1M21 300h1M118 300h1M138 300h1M202 300h1M222 300h1M224 300h1M299 300h1M374 300h1M520 300h1M560 300h1M40 301h1M60 301h1M106 301h1M186 301h2M217 301h1M223 301h1M363 301h1M451 301h1M5 302h1M66 302h1M230 302h1M279 302h1M302 302h1M328 302h1M237 303h1M262 303h1M327 303h1M594 303h1M733 303h1M30 304h1M64 304h1M226 304h2M314 304h1M330 304h1M348 304h1M368 304h1M49 305h1M96 305h1M198 305h1M217 305h1M241 305h1M311 305h1M348 305h1M388 305h1M416 305h1M47 306h1M78 306h1M98 306h1M188 306h1M195 306h1M236 306h1M337 306h1M389 306h1M522 306h1M49 307h1M196 307h1M236 307h1M317 307h1M403 307h1M471 307h1M485 307h1M514 307h1M89 308h1M118 308h1M127 308h1M177 308h1M261 308h1M323 308h1M474 308h1M203 309h1M244 309h1M344 309h1M462 309h1M565 309h1M167 310h1M302 310h1M331 310h1M356 310h1M398 310h1M461 310h1M503 310h1M549 310h1M27 311h1M188 311h1M259 311h1M521 311h1M557 311h1M96 312h1M335 312h1M344 312h1M375 312h1M433 312h1M524 312h1M96 313h1M98 313h1M134 313h1M214 313h1M19 314h1M56 314h1M156 314h1M161 314h1M176 314h1M194 314h1M210 314h1M331 314h1M363 314h1M611 314h1M659 314h1M69 315h1M227 315h1M312 315h1M364 315h1M409 315h1M8 316h1M61 316h1M150 316h1M223 316h1M425 316h1M540 316h1M649 316h1M190 317h1M297 317h1M338 317h1M372 317h1M438 318h1M457 318h1M531 318h1M537 318h1M7 319h1M221 319h1M385 319h1M408 319h1M23 320h1M85 320h1M182 320h1M285 320h1M402 320h1M439 320h1M207 321h1M252 321h1M389 321h1M771 321h1M24 322h1M149 322h1M333 322h1M704 322h1M868 322h1M42 323h1M101 323h1M129 323h1M192 323h1M274 323h1M556 323h1M593 323h1M120 324h1M214 324h1M235 324h1M340 324h1M455 324h1M477 324h1M553 324h1M63 325h1M83 325h1M98 325h1M119 325h1M186 325h1M448 325h1M140 326h1M212 326h1M309 326h1M391 326h1M520 326h1M600 326h1M90 327h1M130 327h2M133 327h1M195 327h1M529 327h1M552 327h1M753 327h1M101 328h1M211 328h1M224 328h1M239 328h1M388 328h1M403 328h1M446 328h1M47 329h1M208 329h1M226 329h1M231 329h1M697 329h1M123 330h1M180 330h1M416 330h1M456 330h1M110 331h1M287 331h1M470 331h1M569 331h1M44 332h1M59 332h1M73 332h1M275 332h1M289 332h1M314 332h1M564 332h1M37 333h1M179 333h1M224 333h1M290 333h1M421 333h1M479 333h1M632 333h1M11 334h1M14 334h1M84 334h1M176 334h1M264 334h1M589 334h1M696 334h1M767 334h1M17 335h1M69 335h1M134 335h1M341 335h1M54 336h1M107 336h1M130 336h1M247 336h1M271 336h1M462 336h1M621 336h1M50 337h1M72 337h1M123 337h2M262 337h1M314 337h2M179 338h1M282 338h1M380 338h1M712 338h1M14 339h1M347 339h1M361 339h1M447 339h1M672 339h1M163 340h1M182 340h1M228 340h1M335 340h1M11 341h1M40 341h1M128 341h1M150 341h1M356 341h1M641 341h1M677 341h1M55 342h1M244 342h1M410 342h1M376 343h1M18 344h1M32 344h1M145 344h1M176 344h1M274 344h1M565 344h1M38 345h1M111 345h1M213 345h1M222 345h1M290 345h1M404 345h1M470 345h1M38 346h1M66 346h1M68 346h1M94 346h1M134 346h1M387 346h1M426 346h1M741 346h1M53 347h1M134 347h1M197 347h1M342 347h1M352 347h1M401 347h1M785 347h1M144 348h1M256 348h1M288 348h1M291 348h1M407 348h1M456 348h1M492 348h1M10 349h2M118 349h1M207 349h1M138 350h2M283 350h1M378 350h1M398 350h1M518 350h1M215 351h1M435 351h1M473 351h1M675 351h1M102 352h1M122 352h1M145 352h1M418 352h1M443 352h1M552 352h1M10 353h1M26 353h1M54 353h1M144 353h1M209 353h1M213 353h1M218 353h1M246 353h1M335 353h1M468 353h1M674 353h1M15 354h1M27 354h1M52 354h1M158 354h1M227 354h1M350 354h1M493 354h1M38 355h1M99 355h1M209 355h1M214 355h1M229 355h1M240 355h1M429 355h1M483 355h1M806 355h1M82 356h1M367 356h1M403 356h1M172 357h1M250 357h1M390 357h1M513 357h1M590 357h1M21 358h1M43 358h1M50 358h1M76 358h1M104 358h1M161 358h1M205 358h1M578 358h1M53 359h1M93 359h1M108 359h1M198 359h1M217 359h1M229 359h1M525 359h1M548 359h1M666 359h1M13 360h1M57 360h1M166 360h1M175 360h1M276 360h1M375 360h1M391 360h1M643 360h1M67 361h1M72 361h1M84 361h1M314 361h1M324 361h1M639 362h1M23 363h1M64 363h1M105 363h1M164 363h1M236 363h1M400 363h1M602 363h1M43 364h1M126 364h1M166 364h1M209 364h1M232 364h1M383 364h1M393 364h1M36 365h1M51 365h1M259 365h1M495 365h1M38 366h1M60 366h1M266 366h1M280 366h1M451 366h1M3 367h1M151 367h1M254 367h1M513 367h1M532 367h1M570 367h1M605 367h1M62 368h1M141 368h1M222 368h1M422 368h1M424 368h1M611 368h1M124 369h2M145 369h1M189 369h1M399 369h1M477 369h1M44 370h1M49 370h1M88 370h1M91 370h1M161 370h1M210 370h1M405 370h1M508 370h1M32 371h1M96 371h1M104 371h1M137 371h1M372 371h1M425 371h1M619 371h1M642 371h1M77 372h1M100 372h1M278 372h1M323 372h1M349 372h1M403 372h1M435 372h1M559 372h1M637 372h1M90 373h1M171 373h1M271 373h1M400 373h1M426 373h1M519 373h1M135 374h1M304 374h1M396 374h1M409 374h1M534 374h1M631 374h1M869 374h1M16 375h1M28 375h1M32 375h1M280 375h1M306 375h1M363 375h1M376 375h1M451 375h1M466 375h1M641 375h1M17 376h1M168 376h1M213 376h1M291 376h1M317 376h1M479 376h1M59 377h1M238 377h1M349 377h1M390 377h1M402 377h1M409 377h1M473 377h1M662 377h1M40 378h1M95 378h1M237 378h1M305 378h1M311 378h1M455 378h1M552 378h1M641 378h1M696 378h1M788 378h1M3 379h1M46 379h1M79 379h1M263 379h1M288 379h1M302 379h1M306 379h1M321 379h1M346 379h1M411 379h1M466 379h1M515 379h1M567 379h1M590 379h1M618 379h1M621 379h1M642 379h1M146 380h1M166 380h1M635 380h1M29 381h1M287 381h1M307 381h1M324 381h1M374 381h1M508 381h1M813 381h1M2 382h1M712 382h1M84 383h1M214 383h1M299 383h1M448 383h1M487 383h1M221 384h1M492 384h1M523 384h1M791 384h1M198 385h1M311 385h1M339 385h1M540 385h1M565 385h1M667 385h1M403 386h1M493 386h1M499 386h1M20 387h1M37 387h1M113 387h1M219 387h1M230 387h1M275 387h1M313 387h1M323 387h1M369 387h1M412 387h1M40 388h1M103 388h1M123 388h1M276 388h1M369 388h1M461 388h1M173 389h1M182 389h1M467 389h1M627 389h1M52 390h1M145 390h1M407 390h1M442 390h1M585 390h1M34 391h1M77 391h1M116 391h1M166 391h1M238 391h1M419 391h1M438 391h1M865 391h1M517 392h1M6 393h2M229 393h1M429 393h1M530 393h1M25 394h1M179 394h1M255 394h1M302 394h1M331 394h1M381 394h1M398 394h1M437 394h1M647 394h1M147 395h1M169 395h1M526 395h1M167 396h1M231 396h1M467 396h1M493 396h1M791 396h1M817 396h1M130 397h1M145 397h1M240 397h1M251 397h1M352 397h1M424 397h1M464 397h1M108 398h1M231 398h1M265 398h1M351 398h1M356 398h1M506 398h1M116 399h1M176 399h1M185 399h1M208 399h1M271 399h1M302 399h1M349 399h1M406 399h1M647 399h1M128 400h1M187 400h1M233 400h1M237 400h1M328 400h1M85 401h1M103 401h1M283 401h1M288 401h1M292 401h1M296 401h1M346 401h1M449 401h1M672 401h1M25 402h1M35 402h1M114 402h1M131 402h1M153 402h1M183 402h1M248 402h1M265 402h1M92 403h1M199 403h1M322 403h1M347 403h1M455 403h1M677 403h1M65 404h1M146 404h1M122 405h1M163 405h1M331 405h1M372 405h1M391 405h1M453 405h1" stroke="#00f6f6" stroke-width="1" fill="none" transform="translate(0 .5)" shape-rendering="crispEdges"/><path d="M19 199h1M8 239h1M23 239h1M40 239h1M124 239h1M141 239h1M160 239h1M226 239h1M235 239h1M272 239h1M275 239h1M288 239h1M426 239h1M465 239h1M548 239h1M633 239h1M7 240h2M18 240h1M22 240h1M30 240h1M45 240h1M53 240h3M57 240h1M60 240h1M63 240h1M70 240h1M75 240h1M82 240h1M86 240h1M88 240h1M90 240h1M92 240h1M98 240h1M106 240h1M110 240h2M120 240h1M129 240h2M133 240h1M136 240h2M157 240h1M164 240h1M170 240h1M173 240h1M179 240h2M187 240h1M189 240h1M199 240h1M215 240h1M222 240h2M246 240h1M253 240h1M269 240h2M279 240h1M286 240h2M293 240h1M300 240h1M312 240h1M320 240h1M331 240h1M335 240h1M360 240h1M368 240h1M380 240h1M384 240h1M406 240h1M409 240h1M417 240h1M419 240h1M423 240h1M433 240h1M437 240h1M464 240h1M490 240h1M505 240h1M513 240h1M531 240h1M565 240h1M580 240h1M582 240h1M612 240h2M623 240h1M650 240h1M656 240h1M690 240h1M718 240h1M722 240h1M729 240h1M831 240h1M2 241h5M8 241h3M12 241h10M23 241h1M25 241h1M27 241h1M29 241h5M35 241h1M37 241h1M39 241h2M42 241h3M46 241h1M51 241h5M57 241h7M65 241h4M70 241h5M77 241h1M79 241h5M85 241h6M93 241h24M118 241h1M120 241h3M125 241h7M133 241h8M142 241h9M152 241h1M154 241h1M156 241h4M161 241h2M164 241h2M168 241h5M174 241h5M180 241h2M183 241h3M187 241h1M191 241h3M195 241h1M197 241h4M202 241h1M204 241h1M206 241h4M211 241h2M214 241h1M216 241h26M243 241h1M245 241h5M251 241h3M255 241h1M258 241h1M262 241h1M265 241h13M279 241h5M286 241h2M289 241h3M293 241h2M298 241h5M305 241h1M308 241h6M315 241h2M318 241h2M321 241h4M327 241h5M333 241h2M337 241h7M346 241h1M348 241h5M354 241h1M356 241h5M363 241h7M371 241h2M374 241h2M377 241h1M380 241h19M402 241h2M405 241h3M410 241h1M412 241h1M415 241h6M423 241h1M425 241h1M429 241h2M433 241h2M437 241h6M444 241h6M451 241h1M453 241h2M457 241h4M466 241h3M470 241h3M474 241h2M477 241h4M482 241h4M487 241h2M490 241h1M492 241h2M495 241h1M498 241h1M500 241h2M505 241h2M508 241h2M511 241h1M513 241h4M518 241h7M526 241h1M530 241h1M532 241h1M534 241h2M537 241h2M543 241h1M545 241h1M548 241h1M550 241h5M557 241h1M560 241h1M563 241h1M565 241h1M567 241h3M572 241h1M576 241h1M578 241h1M580 241h6M590 241h1M592 241h1M594 241h3M598 241h1M605 241h2M609 241h1M613 241h1M616 241h1M618 241h2M622 241h1M625 241h1M627 241h1M631 241h1M633 241h1M635 241h1M637 241h3M641 241h1M643 241h1M650 241h2M657 241h1M668 241h1M676 241h4M681 241h1M685 241h1M687 241h1M698 241h1M707 241h1M710 241h1M713 241h3M717 241h3M721 241h4M727 241h1M732 241h2M735 241h1M754 241h1M761 241h2M770 241h1M776 241h1M778 241h1M783 241h1M785 241h2M792 241h2M801 241h1M816 241h2M825 241h3M831 241h1M840 241h1M842 241h1M844 241h1M849 241h1M863 241h1M868 241h1M874 241h1M2 242h1M8 242h1M22 242h1M25 242h1M29 242h1M31 242h1M42 242h1M55 242h1M60 242h1M68 242h1M75 242h2M82 242h1M84 242h1M88 242h2M94 242h1M100 242h1M104 242h2M109 242h1M111 242h4M126 242h1M129 242h1M134 242h1M143 242h1M145 242h1M156 242h1M166 242h1M180 242h1M185 242h1M187 242h1M198 242h1M227 242h1M231 242h1M250 242h1M272 242h1M278 242h1M281 242h1M283 242h1M286 242h1M290 242h1M303 242h1M313 242h1M317 242h1M326 242h2M344 242h2M348 242h1M355 242h2M380 242h1M386 242h1M390 242h1M392 242h1M396 242h1M401 242h1M404 242h1M415 242h1M422 242h1M425 242h1M435 242h1M441 242h1M478 242h1M485 242h1M487 242h1M491 242h1M493 242h1M501 242h1M516 242h2M523 242h1M529 242h1M553 242h1M568 242h1M571 242h1M613 242h1M639 242h1M715 242h1M736 242h1M745 242h1M760 242h1M769 242h1M778 242h1M803 242h1M855 242h2M94 243h1M140 243h1M148 243h1M281 243h1M387 243h1M612 243h1M6 244h1M16 244h1M31 244h1M33 244h1M39 244h1M46 244h1M51 244h1M53 244h1M61 244h1M70 244h1M72 244h1M79 244h1M83 244h1M89 244h1M91 244h1M93 244h1M97 244h1M104 244h1M106 244h1M113 244h1M116 244h1M121 244h1M130 244h1M132 244h1M140 244h2M144 244h1M147 244h1M150 244h1M156 244h2M159 244h1M166 244h1M182 244h3M187 244h1M193 244h2M207 244h1M220 244h1M223 244h1M229 244h2M234 244h1M239 244h1M241 244h1M245 244h1M247 244h1M250 244h1M252 244h1M275 244h1M278 244h1M290 244h1M292 244h1M295 244h1M299 244h1M305 244h1M308 244h2M311 244h1M316 244h3M330 244h1M333 244h2M339 244h1M373 244h1M376 244h1M388 244h1M391 244h1M397 244h3M413 244h1M416 244h1M425 244h1M428 244h1M433 244h1M435 244h2M441 244h2M451 244h1M454 244h1M459 244h3M467 244h2M490 244h1M496 244h1M507 244h1M512 244h2M524 244h1M533 244h1M538 244h1M543 244h1M557 244h1M562 244h1M566 244h1M570 244h1M577 244h2M580 244h2M592 244h1M594 244h1M596 244h1M598 244h1M601 244h1M607 244h1M617 244h1M631 244h1M643 244h1M647 244h1M667 244h1M682 244h1M706 244h1M712 244h1M729 244h1M734 244h1M739 244h1M749 244h1M762 244h1M765 244h1M783 244h1M797 244h1M818 244h1M824 244h1M879 244h1M68 245h1M74 245h1M118 245h1M143 245h1M200 245h1M226 245h1M301 245h2M388 245h1M437 245h2M458 245h1M499 245h1M602 245h1M729 245h1M821 245h1M845 245h1M81 246h1M103 246h1M182 246h1M212 246h1M242 246h1M245 246h1M304 246h1M386 246h1M397 246h1M508 246h1M604 246h1M801 246h1" stroke="#0482ff" stroke-width="1" fill="none" transform="translate(0 .5)" shape-rendering="crispEdges"/><path d="M891 387h1M272 389h1M838 389h1M49 390h1M144 390h1M311 390h1M338 390h1M380 390h1M653 390h1M183 391h1M200 391h1M401 391h1M518 391h1M160 392h1M217 392h1M265 392h1M303 392h1M320 392h1M452 392h1M15 393h1M79 393h1M95 393h1M106 393h2M139 393h1M149 393h2M170 393h1M210 393h2M249 393h1M266 393h1M277 393h1M291 393h1M335 393h1M342 393h1M369 393h1M380 393h1M387 393h1M414 393h1M442 393h1M474 393h1M515 393h2M602 393h1M617 393h1M686 393h1M858 393h1M2 394h1M4 394h3M8 394h4M13 394h9M23 394h2M26 394h7M34 394h10M45 394h11M57 394h9M67 394h4M72 394h15M88 394h10M99 394h8M108 394h2M111 394h8M121 394h7M129 394h3M134 394h10M146 394h1M148 394h3M152 394h5M159 394h4M164 394h3M168 394h15M184 394h9M194 394h10M205 394h5M211 394h2M214 394h10M225 394h14M240 394h6M248 394h2M251 394h1M253 394h8M262 394h13M279 394h6M286 394h6M293 394h1M295 394h1M297 394h6M305 394h5M311 394h4M316 394h1M318 394h1M320 394h5M327 394h9M337 394h2M340 394h9M350 394h8M360 394h14M375 394h2M378 394h3M382 394h2M385 394h21M407 394h4M412 394h9M422 394h11M434 394h2M439 394h7M447 394h2M451 394h6M458 394h1M460 394h2M463 394h1M465 394h1M467 394h2M470 394h6M477 394h1M479 394h2M482 394h2M485 394h1M487 394h7M496 394h1M500 394h1M502 394h3M506 394h8M515 394h2M518 394h3M522 394h4M528 394h8M537 394h1M539 394h2M544 394h1M546 394h4M551 394h1M553 394h1M555 394h1M557 394h1M559 394h4M564 394h2M567 394h1M569 394h4M574 394h1M576 394h2M579 394h4M585 394h2M589 394h1M592 394h3M598 394h3M604 394h1M606 394h5M612 394h1M615 394h5M623 394h1M625 394h1M628 394h2M631 394h1M634 394h1M641 394h2M644 394h1M647 394h1M650 394h1M655 394h1M658 394h1M660 394h3M665 394h1M669 394h1M671 394h2M679 394h1M683 394h1M685 394h2M688 394h1M690 394h1M693 394h1M696 394h3M702 394h7M711 394h1M714 394h1M716 394h2M719 394h3M724 394h2M731 394h2M735 394h1M748 394h1M751 394h1M753 394h1M759 394h1M764 394h1M770 394h3M774 394h2M778 394h1M780 394h1M783 394h1M786 394h1M788 394h1M790 394h1M799 394h1M801 394h3M806 394h1M811 394h1M815 394h1M817 394h1M843 394h3M847 394h1M849 394h1M859 394h1M879 394h1M881 394h1M52 395h1M119 395h1M126 395h1M137 395h1M175 395h1M180 395h1M196 395h1M257 395h1M272 395h1M294 395h1M331 395h1M427 395h1M432 395h1M458 395h1M484 395h1M496 395h1M534 395h1M591 395h1M604 395h2" stroke="#08f008" stroke-width="1" fill="none" transform="translate(0 .5)" shape-rendering="crispEdges"/><path d="M9 396h1M15 396h1M20 396h1M25 396h1M27 396h1M30 396h1M46 396h1M48 396h3M59 396h2M64 396h1M66 396h1M71 396h2M78 396h1M83 396h1M88 396h1M90 396h1M100 396h1M108 396h1M115 396h1M120 396h1M122 396h1M125 396h1M141 396h1M144 396h1M146 396h1M148 396h1M163 396h1M177 396h1M182 396h1M184 396h1M189 396h1M199 396h2M204 396h3M208 396h1M212 396h1M217 396h1M219 396h1M239 396h1M250 396h1M255 396h1M257 396h1M261 396h1M264 396h1M270 396h1M276 396h1M280 396h2M283 396h1M286 396h1M290 396h1M299 396h1M305 396h1M309 396h2M312 396h2M319 396h1M332 396h1M339 396h2M368 396h1M378 396h1M384 396h1M387 396h3M394 396h1M407 396h1M418 396h1M422 396h2M427 396h1M431 396h1M437 396h2M453 396h3M472 396h1M481 396h1M484 396h1M506 396h1M509 396h1M568 396h1M578 396h1M596 396h1M599 396h2M617 396h1M620 396h1M627 396h1M630 396h1M669 396h1M701 396h1M706 396h1M722 396h1M746 396h1M767 396h1M785 396h1M797 396h1M804 396h1M846 396h1M881 396h1M4 399h1M9 399h1M25 399h1M31 399h1M43 399h1M58 399h2M77 399h1M79 399h1M81 399h1M116 399h1M131 399h1M143 399h1M147 399h1M149 399h1M159 399h1M164 399h1M188 399h1M215 399h1M217 399h1M250 399h1M257 399h1M269 399h1M296 399h1M302 399h1M310 399h1M320 399h1M322 399h1M362 399h1M369 399h1M386 399h1M395 399h1M437 399h1M486 399h1M489 399h1M497 399h1M499 399h1M523 399h1M560 399h1M608 399h1M650 399h1M690 399h1M711 399h1M801 399h1M869 399h1M2 400h3M9 400h1M15 400h3M19 400h1M21 400h1M24 400h1M29 400h1M33 400h1M38 400h1M41 400h1M44 400h2M47 400h1M49 400h1M51 400h1M53 400h1M55 400h1M58 400h3M64 400h2M69 400h1M75 400h1M79 400h1M83 400h1M85 400h3M94 400h3M100 400h1M102 400h2M109 400h2M117 400h1M121 400h1M123 400h3M128 400h1M130 400h1M133 400h1M135 400h1M138 400h1M140 400h1M143 400h2M146 400h2M150 400h1M152 400h1M154 400h1M156 400h1M159 400h1M163 400h1M169 400h4M174 400h3M179 400h3M183 400h2M186 400h1M193 400h2M200 400h1M202 400h2M205 400h3M209 400h2M219 400h2M224 400h1M226 400h3M242 400h2M245 400h1M256 400h1M258 400h2M263 400h1M265 400h2M271 400h1M273 400h1M275 400h1M277 400h1M279 400h2M282 400h2M285 400h3M289 400h1M291 400h2M294 400h1M299 400h3M303 400h1M305 400h1M307 400h1M309 400h3M316 400h1M319 400h1M323 400h2M327 400h1M333 400h1M335 400h1M337 400h3M341 400h1M346 400h1M350 400h1M353 400h1M360 400h1M362 400h1M364 400h1M367 400h1M381 400h3M388 400h1M393 400h2M396 400h1M398 400h1M405 400h3M409 400h1M414 400h2M421 400h1M425 400h1M436 400h1M439 400h1M441 400h2M445 400h1M448 400h1M453 400h1M455 400h1M462 400h1M466 400h2M476 400h1M479 400h2M483 400h1M489 400h1M491 400h1M495 400h2M500 400h1M502 400h1M504 400h1M506 400h1M508 400h1M513 400h3M521 400h3M527 400h1M532 400h1M535 400h1M537 400h1M542 400h3M561 400h1M573 400h3M577 400h1M587 400h1M620 400h1M625 400h1M628 400h1M643 400h1M655 400h1M660 400h1M662 400h1M664 400h1M680 400h1M684 400h1M689 400h1M702 400h1M704 400h1M711 400h1M728 400h2M732 400h1M735 400h1M766 400h1M799 400h1M804 400h1M818 400h1M836 400h1M844 400h1M2 401h4M7 401h3M11 401h2M14 401h3M18 401h1M20 401h22M43 401h8M52 401h6M61 401h5M68 401h1M70 401h2M74 401h1M76 401h2M79 401h3M83 401h1M85 401h4M90 401h2M93 401h22M116 401h2M119 401h4M124 401h3M129 401h4M134 401h1M136 401h1M138 401h3M142 401h2M145 401h1M147 401h1M150 401h1M152 401h9M162 401h6M169 401h15M185 401h7M193 401h19M213 401h1M217 401h6M224 401h1M227 401h7M237 401h3M241 401h1M243 401h1M245 401h1M247 401h1M249 401h6M258 401h2M261 401h1M263 401h2M266 401h1M268 401h2M271 401h9M281 401h1M283 401h12M296 401h1M298 401h7M307 401h17M325 401h6M332 401h3M336 401h2M339 401h12M352 401h4M357 401h2M360 401h1M363 401h3M367 401h2M370 401h2M376 401h1M378 401h1M382 401h7M390 401h2M394 401h1M397 401h6M404 401h4M409 401h2M412 401h1M414 401h1M416 401h3M420 401h1M422 401h4M427 401h5M433 401h1M435 401h1M437 401h3M442 401h3M446 401h2M451 401h1M453 401h2M456 401h2M459 401h2M462 401h1M464 401h1M468 401h3M472 401h4M477 401h4M483 401h1M485 401h1M487 401h3M492 401h2M496 401h1M498 401h4M503 401h1M505 401h1M507 401h5M513 401h2M517 401h2M521 401h2M524 401h1M527 401h2M530 401h1M533 401h4M538 401h9M548 401h1M550 401h1M553 401h1M555 401h5M561 401h3M565 401h1M567 401h1M569 401h3M574 401h1M577 401h3M581 401h1M588 401h3M594 401h2M604 401h2M608 401h1M610 401h1M617 401h2M621 401h1M624 401h1M626 401h2M630 401h2M634 401h1M641 401h2M645 401h1M648 401h1M653 401h1M657 401h1M660 401h1M669 401h1M671 401h1M673 401h5M687 401h2M693 401h1M697 401h1M703 401h1M712 401h1M718 401h1M724 401h2M727 401h1M730 401h2M733 401h2M742 401h2M745 401h2M750 401h1M753 401h1M761 401h1M764 401h2M775 401h2M778 401h1M780 401h2M783 401h1M785 401h1M789 401h3M799 401h1M801 401h1M810 401h2M817 401h2M821 401h2M827 401h1M836 401h1M838 401h1M845 401h1M850 401h1M857 401h1M865 401h1M868 401h2M873 401h1M2 402h2M6 402h1M9 402h1M16 402h1M18 402h1M20 402h1M22 402h1M29 402h1M44 402h1M49 402h1M52 402h1M59 402h1M64 402h1M68 402h1M70 402h2M79 402h1M82 402h2M88 402h1M90 402h1M94 402h1M100 402h1M107 402h1M114 402h1M126 402h1M129 402h2M139 402h1M142 402h1M148 402h1M152 402h1M159 402h1M167 402h1M176 402h2M181 402h1M192 402h1M195 402h1M200 402h1M206 402h1M210 402h1M213 402h1M218 402h1M221 402h1M223 402h1M225 402h3M232 402h2M242 402h1M254 402h1M256 402h1M261 402h1M265 402h2M268 402h2M271 402h1M280 402h2M286 402h1M290 402h1M298 402h1M312 402h1M314 402h1M317 402h1M320 402h1M324 402h1M335 402h1M337 402h1M346 402h1M348 402h2M358 402h1M362 402h1M364 402h2M369 402h1M372 402h1M375 402h1M377 402h1M386 402h1M389 402h1M396 402h1M400 402h2M404 402h1M433 402h1M435 402h1M438 402h1M443 402h1M448 402h1M450 402h1M467 402h1M482 402h1M492 402h1M500 402h1M522 402h1M542 402h1M549 402h1M552 402h1M564 402h1M608 402h1M621 402h1M632 402h1M683 402h1M686 402h1M689 402h1M700 402h1M710 402h1M723 402h1M734 402h1M760 402h1M800 402h1M822 402h1M6 403h1M11 403h1M17 403h1M19 403h1M31 403h3M52 403h1M60 403h1M94 403h1M109 403h1M125 403h1M129 403h1M143 403h2M168 403h1M170 403h1M175 403h1M178 403h1M191 403h1M194 403h1M197 403h1M199 403h1M225 403h1M233 403h1M235 403h1M241 403h4M250 403h1M252 403h1M285 403h1M289 403h1M298 403h1M308 403h1M340 403h1M345 403h2M353 403h1M376 403h1M386 403h1M402 403h1M478 403h1M484 403h1M495 403h1M531 403h1M544 403h1M558 403h1M589 403h1M693 403h1M734 403h1M778 403h1M786 403h1M847 403h1M857 403h1M3 404h1M33 404h1M36 404h1M44 404h1M66 404h1M69 404h1M82 404h1M92 404h1M97 404h1M104 404h1M109 404h1M145 404h1M151 404h1M168 404h1M172 404h1M190 404h1M205 404h1M208 404h1M220 404h1M230 404h1M233 404h1M249 404h1M253 404h1M265 404h3M281 404h1M283 404h1M291 404h1M305 404h1M308 404h1M320 404h1M383 404h1M420 404h1M426 404h1M428 404h1M454 404h1M467 404h1M477 404h1M484 404h1M495 404h2M530 404h1M554 404h1M558 404h1M574 404h1M578 404h1M581 404h1M583 404h1M588 404h1M603 404h1M615 404h1M632 404h1M675 404h1M687 404h1M695 404h1M747 404h1M809 404h1M4 405h1M12 405h1M14 405h1M74 405h2M87 405h1M109 405h1M133 405h1M140 405h1M147 405h1M151 405h1M164 405h1M167 405h1M189 405h1M192 405h1M218 405h1M228 405h1M298 405h1M352 405h1M373 405h1M393 405h1M400 405h1M422 405h1M426 405h1M437 405h1M472 405h2M486 405h1M524 405h1M563 405h1M627 405h1M644 405h1M758 405h1" stroke="#ff0808" stroke-width="1" fill="none" transform="translate(0 .5)" shape-rendering="crispEdges"/><path d="M22 396h1M45 396h1M49 396h1M72 396h2M101 396h1M131 396h1M142 396h1M154 396h1M165 396h1M201 396h1M207 396h1M215 396h2M227 396h1M244 396h1M260 396h1M285 396h1M292 396h1M333 396h1M340 396h1M355 396h1M363 396h1M366 396h1M387 396h1M398 396h1M403 396h1M408 396h1M411 396h1M414 396h1M416 396h1M464 396h1M496 396h1M499 396h1M501 396h2M561 396h1M565 396h1M575 396h1M648 396h1M696 396h1M704 396h1M709 396h1M780 396h1M837 396h1M851 396h1M76 399h1M79 399h1M148 399h1M237 399h1M277 399h1M280 399h1M305 399h1M329 399h1M331 399h1M348 399h1M365 399h1M493 399h1M610 399h1M661 399h1M749 399h1M7 400h1M61 400h1M81 400h1M89 400h1M100 400h1M120 400h1M172 400h1M182 400h1M231 400h1M265 400h1M292 400h1M298 400h1M318 400h1M332 400h2M366 400h1M378 400h1M406 400h1M449 400h1M474 400h1M497 400h1M519 400h1M523 400h1M530 400h1M558 400h1M726 400h1M764 400h1M2 401h1M4 401h1M8 401h2M12 401h1M16 401h1M20 401h1M23 401h1M31 401h2M35 401h1M38 401h2M41 401h2M45 401h3M53 401h1M56 401h1M58 401h3M62 401h4M70 401h2M73 401h1M75 401h3M83 401h2M86 401h1M99 401h3M105 401h1M112 401h2M115 401h1M117 401h1M121 401h1M124 401h2M128 401h3M135 401h2M138 401h1M141 401h1M144 401h1M146 401h2M152 401h1M154 401h2M160 401h1M165 401h1M173 401h1M177 401h1M180 401h1M184 401h2M188 401h1M192 401h1M194 401h1M198 401h2M201 401h1M203 401h1M210 401h1M213 401h1M215 401h1M222 401h1M225 401h1M229 401h2M232 401h1M234 401h1M236 401h2M239 401h1M241 401h1M246 401h4M254 401h1M259 401h1M262 401h1M265 401h2M274 401h4M280 401h1M291 401h1M293 401h2M296 401h1M299 401h3M305 401h1M307 401h1M313 401h1M318 401h1M321 401h1M326 401h1M331 401h1M335 401h1M337 401h1M341 401h1M344 401h1M350 401h1M356 401h1M360 401h1M364 401h1M366 401h2M370 401h1M373 401h1M379 401h1M388 401h2M391 401h1M403 401h1M407 401h2M411 401h1M421 401h4M437 401h1M439 401h2M443 401h1M445 401h1M449 401h1M453 401h2M464 401h1M466 401h1M468 401h2M473 401h2M478 401h1M480 401h1M486 401h1M499 401h1M514 401h1M519 401h1M523 401h1M526 401h1M528 401h2M538 401h1M550 401h1M552 401h1M556 401h1M558 401h1M560 401h1M566 401h1M568 401h1M573 401h1M583 401h1M587 401h1M592 401h1M598 401h1M600 401h2M604 401h1M609 401h1M613 401h1M616 401h1M637 401h1M639 401h2M645 401h1M667 401h1M673 401h1M677 401h2M706 401h1M722 401h1M726 401h1M729 401h1M733 401h1M746 401h1M756 401h1M780 401h1M797 401h1M800 401h1M810 401h1M812 401h1M825 401h1M879 401h1M3 402h1M7 402h1M10 402h2M19 402h1M39 402h1M50 402h1M52 402h2M57 402h1M72 402h1M74 402h1M82 402h1M89 402h1M107 402h1M110 402h1M112 402h1M116 402h1M119 402h1M125 402h1M138 402h1M147 402h1M149 402h1M151 402h1M164 402h2M177 402h3M183 402h2M226 402h1M231 402h1M237 402h1M245 402h2M248 402h2M260 402h1M274 402h1M276 402h1M280 402h1M282 402h1M286 402h1M302 402h1M306 402h1M323 402h1M327 402h1M334 402h1M337 402h2M343 402h1M345 402h1M353 402h1M356 402h1M360 402h1M362 402h2M369 402h1M376 402h2M386 402h1M390 402h1M397 402h1M399 402h2M427 402h1M446 402h1M462 402h1M467 402h1M490 402h1M518 402h1M522 402h1M536 402h1M565 402h4M580 402h1M582 402h1M590 402h2M622 402h1M633 402h1M644 402h1M676 402h1M680 402h1M784 402h2M14 403h1M25 403h1M34 403h1M42 403h1M46 403h1M49 403h1M53 403h1M58 403h2M67 403h1M86 403h1M104 403h1M124 403h1M130 403h1M137 403h1M143 403h1M152 403h1M157 403h2M198 403h1M211 403h1M226 403h1M231 403h1M234 403h2M245 403h1M256 403h1M273 403h1M283 403h1M286 403h1M290 403h1M295 403h1M300 403h1M303 403h1M309 403h1M311 403h1M316 403h1M321 403h1M338 403h1M341 403h1M394 403h1M397 403h1M412 403h1M418 403h1M423 403h1M426 403h1M439 403h1M453 403h1M460 403h1M470 403h1M476 403h1M507 403h1M518 403h2M577 403h1M588 403h1M612 403h1M676 403h1M137 404h1M165 404h1M179 404h1M193 404h1M207 404h1M222 404h1M296 404h1M307 404h1M318 404h1M337 404h1M390 404h1M451 404h1M497 404h1M499 404h1M626 404h1M651 404h1M660 404h1M696 404h1M757 404h1M803 404h1M79 405h1M105 405h1M115 405h1M121 405h1M196 405h1M204 405h1M209 405h1M314 405h1M348 405h1M378 405h1M448 405h1M459 405h2M512 405h1M515 405h1M520 405h1M522 405h1M595 405h1M642 405h1M685 405h1M7 406h1M338 406h1M405 406h1M574 406h1" stroke="#fafa00" stroke-width="1" fill="none" transform="translate(0 .5)" shape-rendering="crispEdges"/></svg>
<div class="a" style="left:60px;top:163px;width:4px;height:1px;background:#404040"></div><div class="a" style="left:60px;top:183px;width:4px;height:1px;background:#6e6e6e"></div><div class="a" style="left:60px;top:203px;width:4px;height:1px;background:#404040"></div><div class="a" style="left:60px;top:224px;width:4px;height:1px;background:#6e6e6e"></div><div class="a" style="left:60px;top:244px;width:4px;height:1px;background:#404040"></div><div class="a" style="left:60px;top:264px;width:4px;height:1px;background:#6e6e6e"></div><div class="a" style="left:60px;top:285px;width:4px;height:1px;background:#404040"></div><div class="a" style="left:60px;top:305px;width:4px;height:1px;background:#6e6e6e"></div><div class="a" style="left:60px;top:325px;width:4px;height:1px;background:#404040"></div><div class="a" style="left:60px;top:346px;width:4px;height:1px;background:#6e6e6e"></div><div class="a" style="left:60px;top:366px;width:4px;height:1px;background:#404040"></div><div class="a" style="left:60px;top:387px;width:4px;height:1px;background:#6e6e6e"></div><div class="a" style="left:60px;top:407px;width:4px;height:1px;background:#404040"></div><div class="a" style="left:60px;top:427px;width:4px;height:1px;background:#6e6e6e"></div><div class="a" style="left:60px;top:448px;width:4px;height:1px;background:#404040"></div><div class="a" style="left:60px;top:468px;width:4px;height:1px;background:#6e6e6e"></div><div class="a" style="left:60px;top:489px;width:4px;height:1px;background:#404040"></div><div class="a" style="left:60px;top:509px;width:4px;height:1px;background:#6e6e6e"></div><div class="a" style="left:60px;top:529px;width:4px;height:1px;background:#404040"></div><div class="a" style="left:61px;top:549px;width:3px;height:1px;background:#6e6e6e"></div>
<span class="t" style="left:37.2px;top:137px;font-size:12px;transform:scaleX(0.99);">5.00</span>
<span class="t" style="left:37.2px;top:178px;font-size:12px;transform:scaleX(0.99);">4.50</span>
<span class="t" style="left:37.2px;top:219px;font-size:12px;transform:scaleX(0.99);">4.00</span>
<span class="t" style="left:37.2px;top:259px;font-size:12px;transform:scaleX(0.99);">3.50</span>
<span class="t" style="left:37.2px;top:300px;font-size:12px;transform:scaleX(0.99);">3.00</span>
<span class="t" style="left:37.2px;top:341px;font-size:12px;transform:scaleX(0.99);">2.50</span>
<span class="t" style="left:37.2px;top:382px;font-size:12px;transform:scaleX(0.99);">2.00</span>
<span class="t" style="left:37.2px;top:422px;font-size:12px;transform:scaleX(0.99);">1.50</span>
<span class="t" style="left:37.2px;top:463px;font-size:12px;transform:scaleX(0.99);">1.00</span>
<span class="t" style="left:30.2px;top:504px;font-size:12px;transform:scaleX(0.99);">0.500</span>
<span class="t" style="left:63.6px;top:129px;font-size:12px;transform:scaleX(1.08);">ms</span>
<span class="t" style="left:60.6983px;top:555px;font-size:12px;transform:scaleX(0.99);">0</span>
<span class="t" style="left:146.397px;top:555px;font-size:12px;transform:scaleX(0.99);">25</span>
<span class="t" style="left:236.397px;top:555px;font-size:12px;transform:scaleX(0.99);">51</span>
<span class="t" style="left:325.397px;top:555px;font-size:12px;transform:scaleX(0.99);">76</span>
<span class="t" style="left:412.095px;top:555px;font-size:12px;transform:scaleX(0.99);">102</span>
<span class="t" style="left:501.095px;top:555px;font-size:12px;transform:scaleX(0.99);">128</span>
<span class="t" style="left:591.095px;top:555px;font-size:12px;transform:scaleX(0.99);">153</span>
<span class="t" style="left:680.095px;top:555px;font-size:12px;transform:scaleX(0.99);">179</span>
<span class="t" style="left:770.095px;top:555px;font-size:12px;transform:scaleX(0.99);">204</span>
<span class="t" style="left:859.095px;top:555px;font-size:12px;transform:scaleX(0.99);">230</span>
<span class="t" style="left:940.4px;top:555px;font-size:12px;transform:scaleX(1.04);">256gB</span>
<div class="a" style="left:996px;top:138px;width:73px;height:21px;border:1px solid #3c7fb1;border-radius:3px;background:linear-gradient(180deg,#f2f2f2 0,#ebebeb 48%,#dddddd 50%,#cfcfcf 100%);box-shadow:inset 0 0 0 1px #42d0f6,inset 0 0 0 2px rgba(255,255,255,.55)"></div>
<span class="t" style="left:1021px;top:142px;transform:scaleX(0.8);">Start</span>
<div class="sep" style="left:987px;top:169px;width:101px"></div>
<svg class="a" style="left:991px;top:175px" width="14" height="14" viewBox="0 0 14 14"><defs><linearGradient id="rg1" x1="0" y1="0" x2="1" y2="1"><stop offset="0" stop-color="#cfd2d8"/><stop offset="1" stop-color="#fdfdfd"/></linearGradient></defs><circle cx="6.800" cy="6.900" r="5.700" fill="#f6f6f6" stroke="#8b8d90" stroke-width="1"/><circle cx="6.800" cy="6.900" r="4" fill="url(#rg1)" stroke="#c0c3c8" stroke-width=".7"/><circle cx="6.800" cy="6.900" r="3.400" fill="#173f5f"/><circle cx="6.800" cy="7.100" r="2.300" fill="#2b9fe2"/><circle cx="6.100" cy="6.100" r="1.100" fill="#8fdcf8"/></svg>
<svg class="a" style="left:991px;top:191px" width="14" height="14" viewBox="0 0 14 14"><defs><linearGradient id="rg0" x1="0" y1="0" x2="1" y2="1"><stop offset="0" stop-color="#cfd2d8"/><stop offset="1" stop-color="#fdfdfd"/></linearGradient></defs><circle cx="6.800" cy="6.900" r="5.700" fill="#f6f6f6" stroke="#8b8d90" stroke-width="1"/><circle cx="6.800" cy="6.900" r="4" fill="url(#rg0)" stroke="#c0c3c8" stroke-width=".7"/></svg>
<span class="t" style="left:1008px;top:175px;transform:scaleX(0.8);">Read</span>
<span class="t" style="left:1008px;top:191px;transform:scaleX(0.8);">Write</span>
<div class="sep" style="left:987px;top:208px;width:101px"></div>
<div class="cb" style="left:992px;top:216px"><div class="cbi"></div></div>
<span class="t" style="left:1008px;top:216px;transform:scaleX(0.8);">Short stroke</span>
<div class="a" style="left:992px;top:236px;width:62px;height:20px;border:1px solid #abb0b5;border-radius:2px;background:#fff"></div>
<span class="t" style="left:995px;top:239px;transform:scaleX(0.82);color:#8c8c8c;">40</span>
<div class="a" style="left:1035px;top:238px;width:17px;height:16px;border:1px solid #c2c2c2;background:#f2f2f2"></div><div class="a" style="left:1035px;top:246px;width:17px;height:1px;background:#b9b9b9"></div>
<svg class="a" style="left:1040px;top:240px" width="8" height="13" viewBox="0 0 8 13"><path d="M1 4.200 L3.700 1.500 L6.400 4.200 M1 8.800 L3.700 11.500 L6.400 8.800" fill="none" stroke="#8a8a8a" stroke-width="1.300"/><path d="M2 4.200 H5.400 L3.700 2.500 Z M2 8.800 H5.400 L3.700 10.500 Z" fill="#9a9a9a"/></svg>
<span class="t" style="left:1064.5px;top:239px;transform:scaleX(0.8);">gB</span>
<div class="sep" style="left:987px;top:265px;width:99px"></div>
<div class="cb" style="left:992px;top:276px"><div class="cbi"></div></div><svg class="a" style="left:992px;top:276px" width="13" height="13" viewBox="0 0 13 13"><path d="M3.500 6.600 L5.400 9.600 L9.700 2.900" fill="none" stroke="#44589d" stroke-width="1.800"/></svg>
<span class="t" style="left:1008px;top:276px;transform:scaleX(0.8);">4 KB align</span>
<div class="a" style="left:44px;top:590px;width:521px;height:2px;background:#646464"></div>
<div class="vs" style="left:134px"></div><div class="vs" style="left:243px"></div><div class="vs" style="left:360px"></div><div class="vs" style="left:468px"></div>
<span class="t b" style="left:51.8px;top:578px;font-size:10.5px;transform:scaleX(1.13143);">transfer size</span>
<span class="t b" style="left:143.5px;top:578px;font-size:10.5px;transform:scaleX(1.17714);">operations / sec</span>
<span class="t b" style="left:250.5px;top:578px;font-size:10.5px;transform:scaleX(1.16);">avg. access time</span>
<span class="t b" style="left:365.8px;top:578px;font-size:10.5px;transform:scaleX(1.13143);">max. access time</span>
<span class="t b" style="left:490.5px;top:578px;font-size:10.5px;transform:scaleX(1.18286);">avg. speed</span>
<div class="sw" style="top:599px;background:#ffff00"></div><div class="cb" style="left:44px;top:596px"><div class="cbi"></div></div><svg class="a" style="left:44px;top:596px" width="13" height="13" viewBox="0 0 13 13"><path d="M3.500 6.600 L5.400 9.600 L9.700 2.900" fill="none" stroke="#44589d" stroke-width="1.800"/></svg>
<span class="t" style="left:60px;top:595.2px;transform:scaleX(0.8);">512 bytes</span>
<span class="t b" style="right:885px;top:595.4px;transform-origin:100% 0;font-size:12px;transform:scaleX(1.03);">10547 IOPS</span>
<span class="t b" style="right:776px;top:595.4px;transform-origin:100% 0;font-size:12px;">0.094 ms</span>
<span class="t b" style="right:666px;top:595.4px;transform-origin:100% 0;font-size:12px;">0.171 ms</span>
<span class="t b" style="right:556.5px;top:595.4px;transform-origin:100% 0;font-size:12px;transform:scaleX(1.07);">5.150 MB/s</span>
<div class="sw" style="top:615px;background:#ff0000"></div><div class="cb" style="left:44px;top:612px"><div class="cbi"></div></div><svg class="a" style="left:44px;top:612px" width="13" height="13" viewBox="0 0 13 13"><path d="M3.500 6.600 L5.400 9.600 L9.700 2.900" fill="none" stroke="#44589d" stroke-width="1.800"/></svg>
<span class="t" style="left:60px;top:611.5px;transform:scaleX(0.8);">4 KB</span>
<span class="t b" style="right:885px;top:612.4px;transform-origin:100% 0;font-size:12px;transform:scaleX(1.03);">9564 IOPS</span>
<span class="t b" style="right:776px;top:612.4px;transform-origin:100% 0;font-size:12px;">0.104 ms</span>
<span class="t b" style="right:666px;top:612.4px;transform-origin:100% 0;font-size:12px;">0.947 ms</span>
<span class="t b" style="right:556.5px;top:612.4px;transform-origin:100% 0;font-size:12px;transform:scaleX(1.07);">37.363 MB/s</span>
<div class="sw" style="top:632px;background:#00e000"></div><div class="cb" style="left:44px;top:629px"><div class="cbi"></div></div><svg class="a" style="left:44px;top:629px" width="13" height="13" viewBox="0 0 13 13"><path d="M3.500 6.600 L5.400 9.600 L9.700 2.900" fill="none" stroke="#44589d" stroke-width="1.800"/></svg>
<span class="t" style="left:60px;top:628.5px;transform:scaleX(0.8);">64 KB</span>
<span class="t b" style="right:885px;top:629.4px;transform-origin:100% 0;font-size:12px;transform:scaleX(1.03);">5566 IOPS</span>
<span class="t b" style="right:776px;top:629.4px;transform-origin:100% 0;font-size:12px;">0.179 ms</span>
<span class="t b" style="right:666px;top:629.4px;transform-origin:100% 0;font-size:12px;">1.004 ms</span>
<span class="t b" style="right:556.5px;top:629.4px;transform-origin:100% 0;font-size:12px;transform:scaleX(1.07);">347.926 MB/s</span>
<div class="sw" style="top:649px;background:#0080ff"></div><div class="cb" style="left:44px;top:646px"><div class="cbi"></div></div><svg class="a" style="left:44px;top:646px" width="13" height="13" viewBox="0 0 13 13"><path d="M3.500 6.600 L5.400 9.600 L9.700 2.900" fill="none" stroke="#44589d" stroke-width="1.800"/></svg>
<span class="t" style="left:60px;top:645.5px;transform:scaleX(0.8);">1 MB</span>
<span class="t b" style="right:885px;top:646.4px;transform-origin:100% 0;font-size:12px;transform:scaleX(1.03);">486 IOPS</span>
<span class="t b" style="right:776px;top:646.4px;transform-origin:100% 0;font-size:12px;">2.054 ms</span>
<span class="t b" style="right:666px;top:646.4px;transform-origin:100% 0;font-size:12px;">2.586 ms</span>
<span class="t b" style="right:556.5px;top:646.4px;transform-origin:100% 0;font-size:12px;transform:scaleX(1.07);">486.698 MB/s</span>
<div class="sw" style="top:667px;background:#00ffff"></div><div class="cb" style="left:44px;top:664px"><div class="cbi"></div></div><svg class="a" style="left:44px;top:664px" width="13" height="13" viewBox="0 0 13 13"><path d="M3.500 6.600 L5.400 9.600 L9.700 2.900" fill="none" stroke="#44589d" stroke-width="1.800"/></svg>
<span class="t" style="left:60px;top:663.5px;transform:scaleX(0.8);">Random</span>
<span class="t b" style="right:885px;top:663.4px;transform-origin:100% 0;font-size:12px;transform:scaleX(1.03);">928 IOPS</span>
<span class="t b" style="right:776px;top:663.4px;transform-origin:100% 0;font-size:12px;">1.076 ms</span>
<span class="t b" style="right:666px;top:663.4px;transform-origin:100% 0;font-size:12px;">3.456 ms</span>
<span class="t b" style="right:556.5px;top:663.4px;transform-origin:100% 0;font-size:12px;transform:scaleX(1.07);">471.208 MB/s</span>
</body></html>
